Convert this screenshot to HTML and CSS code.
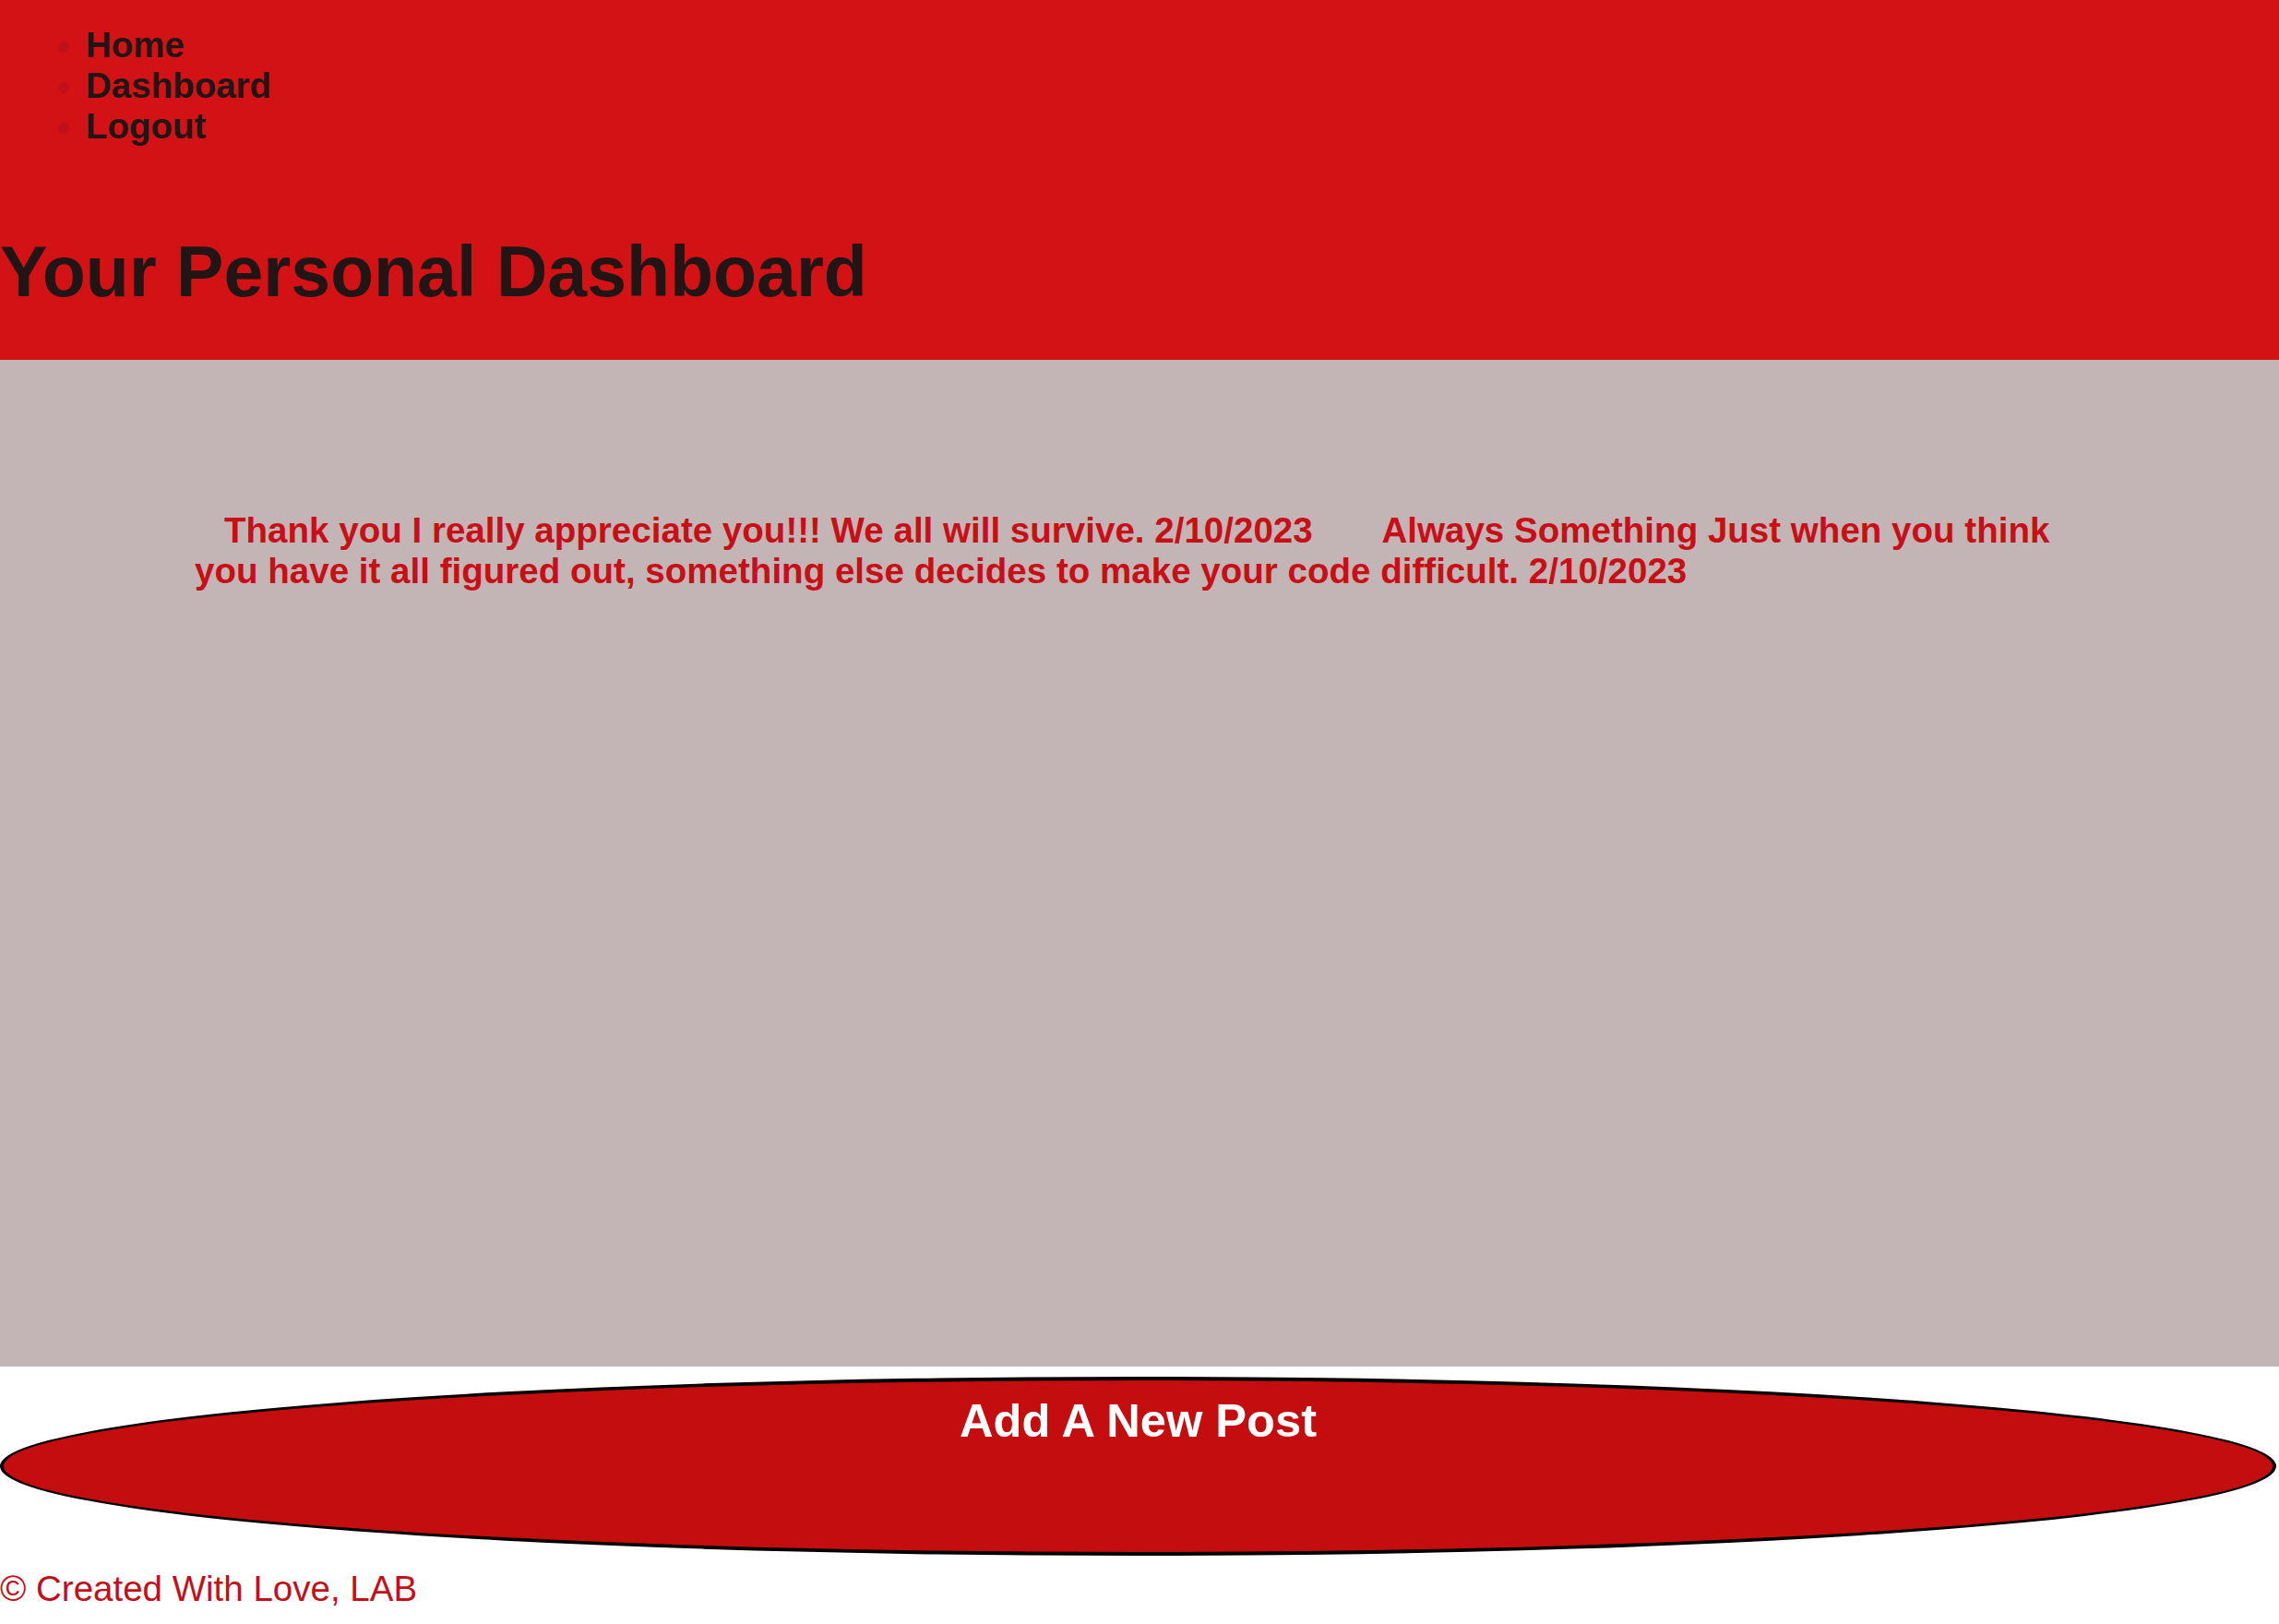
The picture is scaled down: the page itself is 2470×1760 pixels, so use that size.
FILE: index.html
```html
<!DOCTYPE html>
<html lang="en">
<head>
<meta charset="utf-8">
<title>Dashboard</title>
<link rel="stylesheet" href="styles.css">
</head>
<body>
<header class="top">
  <nav>
    <ul class="nav">
      <li><a class="nav-link" href="#">Home</a></li>
      <li><a class="nav-link" href="#">Dashboard</a></li>
      <li><a class="nav-link" href="#">Logout</a></li>
    </ul>
  </nav>
  <h1 class="title">Your Personal Dashboard</h1>
</header>
<main class="posts">
  <p class="post-list"><span class="post">Thank you I really appreciate you!!! We all will survive. 2/10/2023</span> <span class="post">Always Something Just when you think you have it all figured out, something else decides to make your code difficult. 2/10/2023</span></p>
</main>
<div class="add-wrap">
  <a class="add-btn" href="#">Add A New Post</a>
</div>
<footer class="foot">© Created With Love, LAB</footer>
</body>
</html>
```
FILE: styles.css
```css
html, body {
  margin: 0;
  padding: 0;
  background: #ffffff;
  font-family: "Liberation Sans", Arial, sans-serif;
}

.top {
  background: #d31216;
  height: 390px;
  box-sizing: border-box;
  padding-top: 27px;
  overflow: hidden;
}

.nav {
  margin: 0;
  padding-left: 93px;
  font-size: 38.5px;
  line-height: 44px;
  font-weight: bold;
  color: #c2101a;
  list-style: disc;
}

.nav-link {
  color: #211515;
  text-decoration: none;
}

.title {
  margin: 91px 0 0 0;
  font-size: 77px;
  font-weight: bold;
  color: #221515;
  line-height: normal;
}

.posts {
  background: #c3b5b5;
  height: 1091px;
  box-sizing: border-box;
  padding: 163px 208px 0 211px;
}

.post-list {
  margin: 0;
  font-size: 38.55px;
  line-height: 43.5px;
  font-weight: bold;
  color: #c80f17;
}

.post {
  margin: 0 32px;
}

.add-wrap {
  padding-top: 11px;
}

.add-btn {
  display: block;
  width: 2467px;
  height: 194px;
  box-sizing: border-box;
  border: 4px solid #000000;
  border-radius: 50%;
  background: #c40d0f;
  color: #ffffff;
  font-size: 50.6px;
  font-weight: bold;
  text-align: center;
  text-decoration: none;
  padding-top: 14px;
}

.foot {
  margin-top: 14px;
  font-size: 38.5px;
  color: #c30f1a;
}
```
